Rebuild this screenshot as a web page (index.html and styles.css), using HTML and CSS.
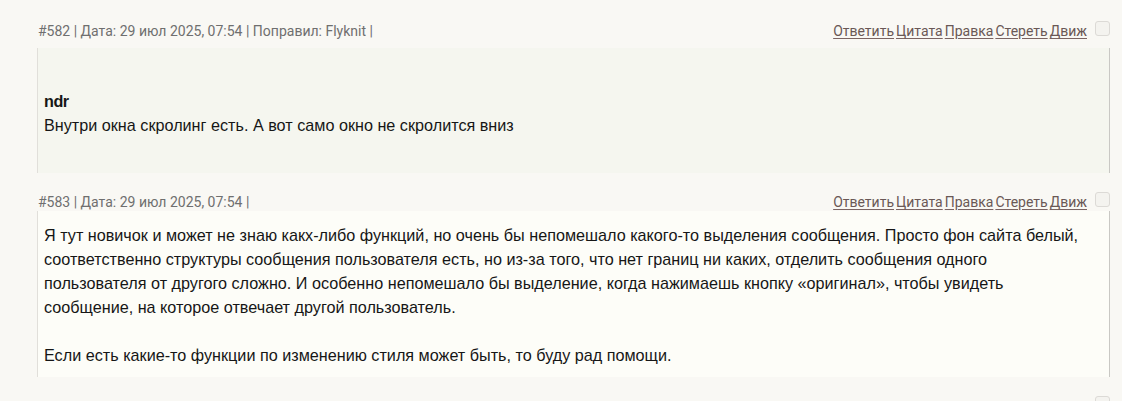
FILE: index.html
```html
<!DOCTYPE html>
<html lang="ru">
<head>
<meta charset="utf-8">
<title>Форум</title>
<link rel="stylesheet" href="styles.css">
</head>
<body>
<div class="thread">
  <div class="post post-first">
    <div class="post-head">
      <div class="meta">#582 | Дата: 29 июл 2025, 07:54 | Поправил: Flyknit |</div>
      <div class="actions">
        <a href="#">Ответить</a> <a href="#">Цитата</a> <a href="#">Правка</a> <a href="#">Стереть</a> <a href="#">Движ</a>
        <span class="check"></span>
      </div>
    </div>
    <div class="post-body body-quote">
      <div class="author">ndr</div>
      <div>Внутри окна скролинг есть. А вот само окно не скролится вниз</div>
    </div>
  </div>

  <div class="post">
    <div class="post-head">
      <div class="meta">#583 | Дата: 29 июл 2025, 07:54 |</div>
      <div class="actions">
        <a href="#">Ответить</a> <a href="#">Цитата</a> <a href="#">Правка</a> <a href="#">Стереть</a> <a href="#">Движ</a>
        <span class="check"></span>
      </div>
    </div>
    <div class="post-body body-plain">
      Я тут новичок и может не знаю какх-либо функций, но очень бы непомешало какого-то выделения сообщения. Просто фон сайта белый,<br>
      соответственно структуры сообщения пользователя есть, но из-за того, что нет границ ни каких, отделить сообщения одного<br>
      пользователя от другого сложно. И особенно непомешало бы выделение, когда нажимаешь кнопку «оригинал», чтобы увидеть<br>
      сообщение, на которое отвечает другой пользователь.<br>
      <br>
      Если есть какие-то функции по изменению стиля может быть, то буду рад помощи.
    </div>
  </div>

  <div class="post">
    <div class="post-head post-head-next">
      <span class="check"></span>
    </div>
  </div>
</div>
</body>
</html>
```

FILE: styles.css
```css
html, body {
  margin: 0;
  padding: 0;
  background: #f9f8f4;
}

body {
  font-family: "Liberation Sans", Arial, sans-serif;
  color: #111;
  overflow: hidden;
}

.thread {
  padding: 2px 12px 0 37px;
}

.post-head {
  display: flex;
  justify-content: space-between;
  align-items: flex-start;
  padding-top: 21px;
  font-family: Roboto, "Liberation Sans", sans-serif;
  font-size: 14px;
  line-height: 17px;
}

.post-head-next {
  justify-content: flex-end;
}

.post-first .post-head {
  padding-bottom: 8px;
}

.meta {
  padding-left: 1px;
  color: #6f6f6f;
}

.actions {
  display: flex;
  align-items: flex-start;
  gap: 2px;
  color: #6a5856;
}

.actions a {
  color: #6a5856;
  text-decoration: underline;
  text-decoration-color: #7a6462;
  text-underline-offset: 2px;
}

.check {
  display: block;
  width: 13px;
  height: 13px;
  margin: -2px 0 0 6px;
  border: 1px solid #dcdad6;
  border-radius: 3px;
  background-color: #f4f3ef;
  background-image: radial-gradient(#e4e2de 0.6px, transparent 0.7px);
  background-size: 2px 2px;
}

.post-body {
  border-left: 1px solid #e1dfda;
  border-right: 1px solid #c9c8c4;
  padding-left: 6px;
  padding-right: 4px;
  font-size: 16.2px;
  line-height: 24px;
  color: #161616;
}

.body-quote {
  background: #f5f6ef;
  padding-top: 41px;
  padding-bottom: 36px;
}

.author {
  font-weight: bold;
  letter-spacing: -0.5px;
}

.body-plain {
  background: #fdfdf8;
  padding-top: 12px;
  padding-bottom: 10px;
}
```
